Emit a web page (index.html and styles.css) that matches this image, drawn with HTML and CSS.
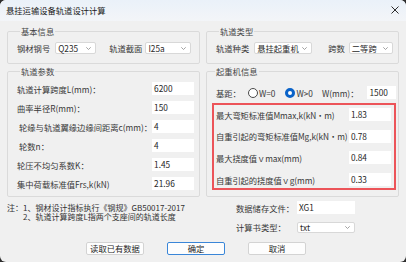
FILE: index.html
```html
<!DOCTYPE html>
<html lang="zh-CN">
<head>
<meta charset="utf-8">
<title>悬挂运输设备轨道设计计算</title>
<link rel="stylesheet" href="styles.css">
</head>
<body>
<div class="window">
  <div class="titlebar">
    <span class="title">悬挂运输设备轨道设计计算</span>
    <svg class="close" width="8" height="8" viewBox="0 0 8 8"><path d="M0.5 0.5L7.5 7.5M7.5 0.5L0.5 7.5" stroke="#2b2b2b" stroke-width="1"/></svg>
  </div>

  <div class="content">
    <fieldset class="group top-group">
      <legend>基本信息</legend>
      <div class="row">
        <span class="lbl">钢材钢号</span>
        <div class="combo c-steel"><span>Q235</span><svg class="chev" width="5" height="3" viewBox="0 0 5 3"><path d="M0.3 0.3L2.5 2.5L4.7 0.3" fill="none" stroke="#8a8a8a" stroke-width="0.8"/></svg></div>
        <span class="lbl l-section">轨道截面</span>
        <div class="combo c-section"><span>I25a</span><svg class="chev" width="5" height="3" viewBox="0 0 5 3"><path d="M0.3 0.3L2.5 2.5L4.7 0.3" fill="none" stroke="#8a8a8a" stroke-width="0.8"/></svg></div>
      </div>
    </fieldset>

    <fieldset class="group top-group">
      <legend>轨道类型</legend>
      <div class="row">
        <span class="lbl l-kind">轨道种类</span>
        <div class="combo c-kind"><span>悬挂起重机</span><svg class="chev" width="5" height="3" viewBox="0 0 5 3"><path d="M0.3 0.3L2.5 2.5L4.7 0.3" fill="none" stroke="#8a8a8a" stroke-width="0.8"/></svg></div>
        <span class="lbl l-span">跨数</span>
        <div class="combo c-span"><span>二等跨</span><svg class="chev" width="5" height="3" viewBox="0 0 5 3"><path d="M0.3 0.3L2.5 2.5L4.7 0.3" fill="none" stroke="#8a8a8a" stroke-width="0.8"/></svg></div>
      </div>
    </fieldset>

    <fieldset class="group params">
      <legend>轨道参数</legend>
      <div class="form-rows">
        <span class="lbl">轨道计算跨度L(mm)：</span><div class="field">6200</div>
        <span class="lbl">曲率半径R(mm)：</span><div class="field">150</div>
        <span class="lbl shift">轮缘与轨道翼缘边缘间距离c(mm)：</span><div class="field">4</div>
        <span class="lbl shift">轮数n：</span><div class="field">4</div>
        <span class="lbl">轮压不均匀系数K：</span><div class="field">1.45</div>
        <span class="lbl">集中荷载标准值Frs,k(kN)</span><div class="field">21.96</div>
      </div>
    </fieldset>

    <fieldset class="group crane">
      <legend>起重机信息</legend>
      <div class="radio-row">
        <span class="lbl">基距：</span>
        <span class="radio r-first"></span><span class="lbl r-text">W=0</span>
        <span class="radio checked r-second"></span><span class="lbl r-text">W&gt;0</span>
        <span class="lbl w-lbl">W(mm)：</span>
        <div class="field w-field">1500</div>
      </div>
      <div class="results">
        <span class="lbl">最大弯矩标准值Mmax,k(kN•m)</span><div class="field">1.83</div>
        <span class="lbl">自重引起的弯矩标准值Mg,k(kN•m)</span><div class="field">0.78</div>
        <span class="lbl">最大挠度值ｖmax(mm)</span><div class="field">0.84</div>
        <span class="lbl">自重引起的挠度值ｖg(mm)</span><div class="field">0.33</div>
      </div>
    </fieldset>
  </div>

  <div class="bottom">
    <div class="notes">
      <div class="note-line">注：1、钢材设计指标执行《钢规》GB50017-2017</div>
      <div class="note-line note-indent">2、轨道计算跨度L指两个支座间的轨道长度</div>
    </div>
    <div class="file-form">
      <span class="lbl">数据储存文件：</span><div class="field file-field">XG1</div>
      <span class="lbl">计算书类型：</span>
      <div class="combo c-type"><span>txt</span><svg class="chev" width="5" height="3" viewBox="0 0 5 3"><path d="M0.3 0.3L2.5 2.5L4.7 0.3" fill="none" stroke="#8a8a8a" stroke-width="0.8"/></svg></div>
    </div>
  </div>

  <div class="buttons">
    <button class="btn">读取已有数据</button>
    <button class="btn primary">确定</button>
    <button class="btn">取消</button>
  </div>
</div>
</body>
</html>
```

FILE: styles.css
```css
* { box-sizing: border-box; }

html, body {
  margin: 0;
  padding: 0;
  background: #2e2e2e;
}

body {
  width: 406px;
  height: 262px;
  overflow: hidden;
  font-family: "Noto Sans CJK SC", "Noto Sans", sans-serif;
  font-size: 8.3px;
  color: #383838;
}

.window {
  width: 406px;
  height: 262px;
  background: #f0f0f0;
  border-radius: 6px;
  overflow: hidden;
  display: flex;
  flex-direction: column;
}

.titlebar {
  height: 21px;
  flex: none;
  display: flex;
  align-items: center;
  justify-content: space-between;
  padding: 0 7px 2px 6px;
  background: linear-gradient(#eaf1f9, #f3f5f8);
  color: #1b1b1b;
}

.title { font-size: 8.3px; line-height: 10px; }

.close { display: block; margin-top: 1px; }

.content {
  display: grid;
  grid-template-columns: 193px 193px;
  grid-template-rows: auto auto;
  column-gap: 6px;
  row-gap: 1px;
  padding: 4px 0 0 7px;
}

.group {
  margin: 0;
  min-width: 0;
  border: 1px solid #dadada;
  border-radius: 2px;
}

.group legend {
  margin-left: 3px;
  padding: 0 1px;
  line-height: 12px;
  font-size: 8.3px;
  color: #454545;
}

.lbl { white-space: nowrap; line-height: 12px; }

.top-group { padding: 5px 4px 9px 9px; }

.row {
  display: flex;
  align-items: center;
  height: 12px;
}

.combo {
  height: 12px;
  background: #fff;
  border: 1px solid #d8d8d8;
  border-radius: 2px;
  display: flex;
  align-items: center;
  justify-content: space-between;
  padding: 0 4px 0 2px;
  line-height: 10px;
  color: #2a2a2a;
}

.combo span { white-space: nowrap; }
.chev { display: block; flex: none; }

.c-steel { width: 41px; margin-left: 5px; }
.l-section { margin-left: 13px; }
.c-section { width: 46px; margin-left: 3px; }

.l-kind { margin-left: 0; }
.c-kind { width: 58px; margin-left: 5px; }
.l-span { margin-left: 16px; }
.c-span { width: 44px; margin-left: 4px; }

.field {
  height: 13px;
  background: #fff;
  padding: 0 2px;
  line-height: 13px;
  color: #262626;
  white-space: nowrap;
}

.params { padding: 5px 10px 6px 9px; }

.form-rows {
  display: grid;
  grid-template-columns: 1fr 42px;
  grid-auto-rows: 13px;
  row-gap: 6px;
  align-items: center;
}

.shift { padding-left: 2px; }

.crane { padding: 9px 2px 4px 5px; }

.radio-row {
  display: flex;
  align-items: center;
  height: 13px;
  padding-left: 4px;
}

.radio {
  width: 10px;
  height: 10px;
  border-radius: 50%;
  border: 1px solid #4a4a4a;
  background: #fff;
  flex: none;
}

.radio.checked {
  border: 3px solid #0a63c9;
  background: #fff;
}

.r-first { margin-left: 7px; }
.r-second { margin-left: 10px; }
.r-text { margin-left: 1px; }
.w-lbl { margin-left: 9px; }
.w-field { width: 42px; margin-left: 9px; }

.results {
  margin-top: 4px;
  border: 2px solid #ec5459;
  padding: 3px 3px 2px 2px;
  display: grid;
  grid-template-columns: 1fr 42px;
  grid-auto-rows: 13px;
  row-gap: 8.7px;
  align-items: center;
  letter-spacing: -0.1px;
}

.bottom {
  display: grid;
  grid-template-columns: 229px 120px;
  padding: 4px 0 0 7px;
}

.notes {
  padding-top: 1px;
  color: #333;
  font-size: 8px;
}

.note-line {
  height: 9px;
  line-height: 11px;
  overflow: visible;
  white-space: nowrap;
}

.note-line + .note-line { margin-top: 0; }

.note-indent { padding-left: 16px; }

.file-form {
  display: grid;
  grid-template-columns: 61px 58px;
  grid-auto-rows: auto;
  row-gap: 7px;
  align-items: center;
}

.file-field { height: 13px; }
.c-type { height: 11px; }

.buttons {
  display: flex;
  gap: 23px;
  padding: 9px 0 0 86px;
}

.btn {
  width: 58px;
  height: 13px;
  padding: 0;
  margin: 0;
  font-family: "Noto Sans CJK SC", "Noto Sans", sans-serif;
  font-size: 8.3px;
  line-height: 11px;
  color: #262626;
  background: #fdfdfd;
  border: 1px solid #d3d3d3;
  border-radius: 2px;
}

.btn.primary { border-color: #3a86d8; }
```
